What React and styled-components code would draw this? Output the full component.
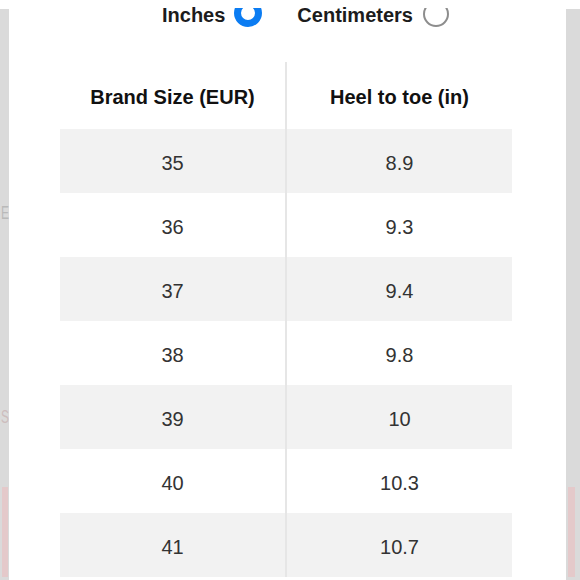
import React, { useState } from "react";
import styled, { createGlobalStyle } from "styled-components";

const GlobalStyle = createGlobalStyle`
  html, body {
    margin: 0;
    padding: 0;
    background: #fff;
  }
  body {
    font-family: "Liberation Sans", Arial, sans-serif;
  }
`;

const Screen = styled.div`
  width: 580px;
  height: 580px;
  overflow: hidden;
  display: flex;
  flex-direction: column;
  background: #fff;
`;

// white header band above the scrolled sheet
const TopBand = styled.div`
  height: 8px;
  flex-shrink: 0;
  background: #fff;
`;

const Viewport = styled.div`
  flex: 1;
  min-height: 0;
  display: grid;
  grid-template-columns: 9px 1fr 14px;
`;

const SideStrip = styled.div`
  margin-top: 1px;
  background: #dadada;
  display: flex;
  flex-direction: column;
  overflow: hidden;
  padding-left: ${(p) => p.$pad}px;
`;

const FaintLetter = styled.span`
  margin-top: ${(p) => p.$top}px;
  margin-left: 1px;
  font-size: 12px;
  line-height: 12px;
  color: ${(p) => p.$color};
  transform: scaleY(1.5);
  transform-origin: top left;
`;

const PinkBlock = styled.div`
  margin-top: auto;
  margin-bottom: 3px;
  width: ${(p) => p.$width}px;
  height: 90px;
  background: #e4c9ca;
`;

const Sheet = styled.div`
  background: #fff;
  display: flex;
  flex-direction: column;
`;

const UnitRow = styled.div`
  display: flex;
  align-items: flex-start;
  flex-shrink: 0;
  height: 19px;
  padding-left: 153px;
`;

const UnitOption = styled.label`
  display: flex;
  align-items: flex-start;
  gap: ${(p) => p.$gap}px;
  margin-right: 35px;
  cursor: pointer;
`;

const UnitLabel = styled.span`
  font-size: 20px;
  font-weight: 700;
  line-height: 15px;
  color: #1c1c1c;
`;

// the radios are scrolled partly under the top band
const RadioClip = styled.span`
  display: block;
  width: 28px;
  height: 19px;
  overflow: hidden;
`;

const Radio = styled.span`
  box-sizing: border-box;
  display: block;
  border-radius: 50%;
  width: ${(p) => (p.$checked ? 28 : 26)}px;
  height: ${(p) => (p.$checked ? 28 : 26)}px;
  margin-top: ${(p) => (p.$checked ? -9 : -7)}px;
  border: ${(p) => (p.$checked ? "7px solid #0b7cf2" : "2.5px solid #8d8d8d")};
`;

const SizeTable = styled.table`
  margin: 35px 0 0 51px;
  width: 452px;
  border-collapse: separate;
  border-spacing: 0;
  table-layout: fixed;
`;

const HeadCell = styled.th`
  height: 64px;
  padding: 3px 0 0;
  font-size: 20px;
  font-weight: 700;
  color: #111;
  text-align: center;
  vertical-align: middle;
  border-right: ${(p) => (p.$first ? "2px solid #e6e6e6" : "none")};
  width: ${(p) => (p.$first ? "225px" : "auto")};
`;

const BodyRow = styled.tr`
  height: 64px;
  background: ${(p) => (p.$shaded ? "#f2f2f2" : "#fff")};
`;

const Cell = styled.td`
  padding: 5px 0 0;
  font-size: 20px;
  color: #333;
  text-align: center;
  vertical-align: middle;
  border-right: ${(p) => (p.$first ? "2px solid #e6e6e6" : "none")};
`;

const sizes = [
  { eur: "35", inches: "8.9" },
  { eur: "36", inches: "9.3" },
  { eur: "37", inches: "9.4" },
  { eur: "38", inches: "9.8" },
  { eur: "39", inches: "10" },
  { eur: "40", inches: "10.3" },
  { eur: "41", inches: "10.7" },
];

const App = () => {
  const [unit, setUnit] = useState("in");

  return (
    <>
      <GlobalStyle />
      <Screen>
        <TopBand />
        <Viewport>
          <SideStrip $pad={0}>
            <FaintLetter $top={195} $color="#b9b9b9">E</FaintLetter>
            <FaintLetter $top={192} $color="#cdbdbd">S</FaintLetter>
            <PinkBlock $width={6} style={{ marginLeft: 2 }} />
          </SideStrip>

          <Sheet>
            <UnitRow>
              <UnitOption $gap={9} onClick={() => setUnit("in")}>
                <UnitLabel>Inches</UnitLabel>
                <RadioClip>
                  <Radio $checked={unit === "in"} />
                </RadioClip>
              </UnitOption>
              <UnitOption $gap={10} onClick={() => setUnit("cm")}>
                <UnitLabel>Centimeters</UnitLabel>
                <RadioClip>
                  <Radio $checked={unit === "cm"} />
                </RadioClip>
              </UnitOption>
            </UnitRow>

            <SizeTable>
              <thead>
                <tr>
                  <HeadCell $first>Brand Size (EUR)</HeadCell>
                  <HeadCell>Heel to toe (in)</HeadCell>
                </tr>
              </thead>
              <tbody>
                {sizes.map((row, i) => (
                  <BodyRow key={row.eur} $shaded={i % 2 === 0}>
                    <Cell $first>{row.eur}</Cell>
                    <Cell>{row.inches}</Cell>
                  </BodyRow>
                ))}
              </tbody>
            </SizeTable>
          </Sheet>

          <SideStrip $pad={2}>
            <PinkBlock $width={7} />
          </SideStrip>
        </Viewport>
      </Screen>
    </>
  );
};

export default App;
